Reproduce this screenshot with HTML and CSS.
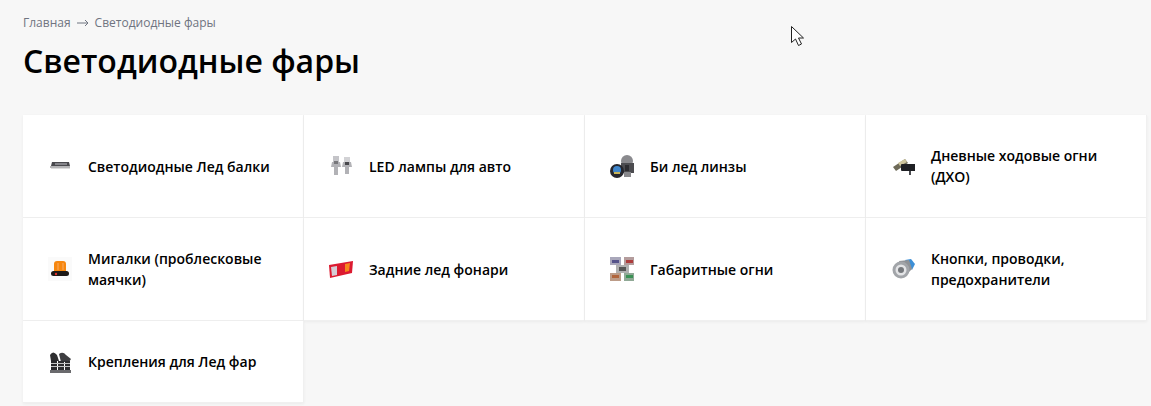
FILE: index.html
```html
<!DOCTYPE html>
<html lang="ru">
<head>
	<meta charset="utf-8">
	<title>Светодиодные фары</title>
	<link rel="stylesheet" href="styles.css">
</head>
<body>
	<div class="page">
		<div class="crumbs">
			<a href="#">Главная</a>
			<svg class="crumbs-arrow" width="12" height="8" viewBox="0 0 12 8"><path d="M0 4h11M8 1l3 3-3 3" fill="none" stroke="#6f7480" stroke-width="1"/></svg>
			<span>Светодиодные фары</span>
		</div>
		<h1>Светодиодные фары</h1>
		<div class="cats">
			<a class="cat" href="#">
				<svg class="cat-icon" viewBox="0 0 24 24">
					<path d="M4 8h17l1 4H3z" fill="#4a4a4e"/>
					<rect x="7" y="9" width="12" height="2" fill="#85858a"/>
					<rect x="2" y="12" width="20" height="2" fill="#b4b4b6"/>
					<rect x="3" y="14" width="19" height="1" fill="#dcdcdc"/>
				</svg>
				<span>Светодиодные Лед балки</span>
			</a>
			<a class="cat" href="#">
				<svg class="cat-icon" viewBox="0 0 24 24">
					<rect x="4" y="2" width="6" height="6" fill="#c4c4c8"/>
					<path d="M3 8h8l1 5H9v8H5v-8H2z" fill="#b2b2b6"/>
					<rect x="5" y="7" width="4" height="3" fill="#77777b"/>
					<rect x="15" y="3" width="6" height="5" fill="#d2d2d5"/>
					<path d="M14 8h8l1 5h-3v7h-4v-7h-3z" fill="#b2b2b6"/>
					<rect x="16" y="8" width="4" height="3" fill="#48484c"/>
				</svg>
				<span>LED лампы для авто</span>
			</a>
			<a class="cat" href="#">
				<svg class="cat-icon" viewBox="0 0 24 24">
					<circle cx="17" cy="7" r="6" fill="#8a8a8e"/>
					<rect x="11" y="9" width="13" height="10" fill="#4c4c50"/>
					<rect x="15" y="11" width="4" height="6" fill="#2c2c30"/>
					<rect x="14" y="18" width="7" height="5" fill="#88888c"/>
					<circle cx="7" cy="17" r="7" fill="#26262c"/>
					<circle cx="7" cy="16" r="4" fill="#3f86cc"/>
					<rect x="4" y="18" width="6" height="2" fill="#c9b458"/>
				</svg>
				<span>Би лед линзы</span>
			</a>
			<a class="cat" href="#">
				<svg class="cat-icon" viewBox="0 0 24 24">
					<path d="M2 13l12-8 3 4-12 8z" fill="#6e6a58"/>
					<path d="M7 9l7-4 2 3-7 4z" fill="#cfc69e"/>
					<rect x="10" y="10" width="15" height="7" rx="1" fill="#1f2024"/>
					<rect x="18" y="17" width="2" height="4" fill="#4a4b50"/>
				</svg>
				<span>Дневные ходовые огни (ДХО)</span>
			</a>
			<a class="cat" href="#">
				<svg class="cat-icon" viewBox="0 0 24 24">
					<rect x="0" y="0" width="24" height="24" fill="#fafafa"/>
					<path d="M6 15V7q0-3 3-3h6q3 0 3 3v8z" fill="#f6870f"/>
					<rect x="9" y="6" width="2" height="7" fill="#f8993a"/>
					<rect x="14" y="6" width="2" height="7" fill="#f8993a"/>
					<rect x="3" y="14" width="18" height="5" rx="2.500" fill="#1c1816"/>
					<circle cx="8" cy="17" r="1.200" fill="#e0302c"/>
				</svg>
				<span>Мигалки (проблесковые маячки)</span>
			</a>
			<a class="cat" href="#">
				<svg class="cat-icon" viewBox="0 0 24 24">
					<path d="M0 8l24-4-1 12L1 21z" fill="#dc1a30"/>
					<path d="M2 10l6-1v9l-5 1z" fill="#d6ccd4"/>
					<path d="M16 7l5-1-1 8-4 1z" fill="#f6861c"/>
				</svg>
				<span>Задние лед фонари</span>
			</a>
			<a class="cat" href="#">
				<svg class="cat-icon" viewBox="0 0 24 24">
					<rect x="0" y="0" width="11" height="8" fill="#a9a7ba"/>
					<rect x="2" y="3" width="7" height="3" fill="#55538a"/>
					<rect x="14" y="0" width="11" height="8" fill="#b49c9c"/>
					<rect x="16" y="3" width="7" height="3" fill="#ad3c3c"/>
					<rect x="6" y="8" width="13" height="8" fill="#b0b0b0"/>
					<rect x="9" y="10" width="7" height="4" fill="#555"/>
					<rect x="0" y="16" width="11" height="8" fill="#bc9c88"/>
					<rect x="2" y="18" width="7" height="3" fill="#b0653c"/>
					<rect x="14" y="16" width="11" height="8" fill="#90a996"/>
					<rect x="16" y="18" width="7" height="3" fill="#3a9155"/>
				</svg>
				<span>Габаритные огни</span>
			</a>
			<a class="cat" href="#">
				<svg class="cat-icon" viewBox="0 0 24 24">
					<path d="M14 3l6-1 4 5-3 6z" fill="#3d8fd6"/>
					<path d="M8 4l10-1 3 9-7 7z" fill="#8f9296"/>
					<circle cx="10" cy="13" r="8.500" fill="#a2a5a9"/>
					<circle cx="10" cy="13" r="5.500" fill="#e3e4e6"/>
					<circle cx="10" cy="13" r="3" fill="#75787c"/>
				</svg>
				<span>Кнопки, проводки, предохранители</span>
			</a>
			<a class="cat" href="#">
				<svg class="cat-icon" viewBox="0 0 24 24">
					<path d="M2 5q3-5 7 0l2 6H3z" fill="#2e2e30"/>
					<path d="M11 4q4-3 7 1l5 4-2 3h-8z" fill="#3e3e41"/>
					<rect x="3" y="10" width="6" height="10" fill="#27272a"/>
					<rect x="10" y="11" width="6" height="9" fill="#2e2e30"/>
					<rect x="17" y="11" width="5" height="9" fill="#2e2e30"/>
					<rect x="3" y="13" width="19" height="1" fill="#c4c4c4"/>
					<rect x="3" y="16" width="19" height="1" fill="#c4c4c4"/>
					<rect x="2" y="20" width="21" height="3" fill="#6a6a6d"/>
				</svg>
				<span>Крепления для Лед фар</span>
			</a>
		</div>
	</div>
	<svg class="cursor" width="14" height="21" viewBox="0 0 14 21"><path d="M.5.500v16l4-3.500 3 6.500 3-1.500-3-6h5z" fill="#fff" stroke="#222" stroke-width="1"/></svg>
</body>
</html>
```

FILE: styles.css
```css
html, body {
	margin: 0;
	height: 100%;
}
body {
	background-color: #f7f7f7;
	font-family: "Open Sans", sans-serif;
	color: #000;
	overflow: hidden;
}
a {
	color: inherit;
	text-decoration: none;
}
.page {
	padding: 15px 4px 0 23px;
}
.crumbs {
	display: flex;
	align-items: center;
	gap: 6px;
	font-size: 12px;
	line-height: 16px;
	color: #6f7480;
}
h1 {
	margin: 9px 0 33px;
	font-size: 32px;
	line-height: 42px;
	font-weight: 600;
}
.cats {
	display: grid;
	grid-template-columns: repeat(4, 1fr);
}
.cat {
	display: flex;
	align-items: center;
	gap: 16px;
	padding: 30px 25px;
	background-color: #fff;
	border-right: 1px solid #f0f0f0;
	border-bottom: 1px solid #f0f0f0;
	box-shadow: 0 1px 3px rgba(0, 0, 0, 0.05);
	font-size: 14px;
	line-height: 21px;
	font-weight: 600;
}
.cat-icon {
	flex: none;
	width: 24px;
	height: 24px;
	margin: -2px 0;
	filter: blur(0.6px);
}
.cursor {
	position: absolute;
	left: 791px;
	top: 26px;
}
```
